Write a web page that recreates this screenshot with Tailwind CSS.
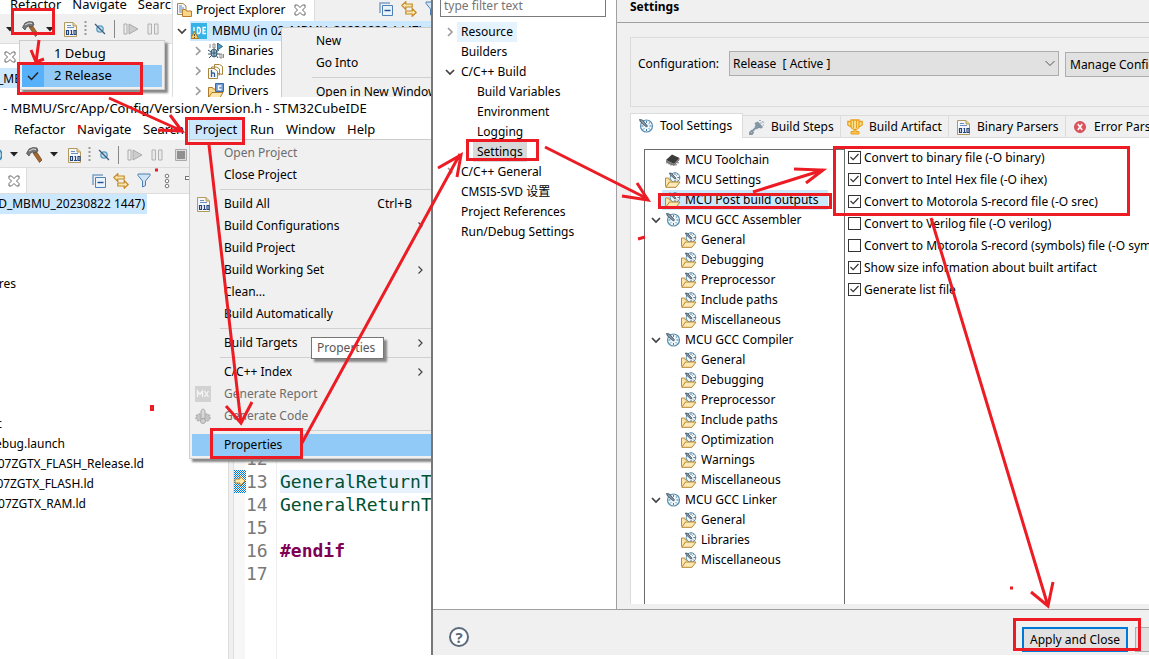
<!DOCTYPE html>
<html lang="en">

<head>
  <meta charset="UTF-8" />
  <meta name="viewport" content="width=device-width, initial-scale=1.0" />
  <title>STM32CubeIDE - build outputs</title>
  <script src="https://cdn.jsdelivr.net/npm/@tailwindcss/browser@4"></script>
</head>

<body class="bg-white">
  <!-- Icon set -->
  <svg class="hidden" xmlns="http://www.w3.org/2000/svg">
    <symbol id="caret" viewBox="0 0 8 5"><path d="M0 0h8L4 4.5z" fill="#222" /></symbol>
    <symbol id="right" viewBox="0 0 8 10"><path d="M2 1l4 4-4 4" fill="none" stroke="currentColor" stroke-width="1.6" /></symbol>
    <symbol id="sub" viewBox="0 0 8 10"><path d="M2.500 1.500L6 5 2.500 8.500" fill="none" stroke="#444" stroke-width="1.200" /></symbol>
    <symbol id="down" viewBox="0 0 10 8"><path d="M1 2l4 4 4-4" fill="none" stroke="#404040" stroke-width="1.7" /></symbol>
    <symbol id="hammer" viewBox="0 0 16 16">
      <path d="M7 6l3-2 6 9-2.500 2.500z" fill="#a5682e" stroke="#6d4019" stroke-width=".7" />
      <path d="M.5 6.500L3 2l4-1.500 4 .5 1 3-3 2-2-1-2.500 1L3 9z" fill="#777" stroke="#444" stroke-width=".7" />
      <path d="M3 4l4-2 3 .5" fill="none" stroke="#ddd" />
    </symbol>
    <symbol id="bin" viewBox="0 0 14 16">
      <path d="M.5 15.500V1.500h8.500l3.500 3.500v10.500z" fill="#f4f6fa" stroke="#b29a5c" />
      <path d="M9 1.500V5h3.500" fill="#e7cf8b" stroke="#b29a5c" />
      <path d="M3 4.500h4M3 6.500h7" stroke="#6b8fc0" />
      <path d="M2.500 9.500h2v4h-2zM10 9.500h2v4h-2zM6.500 9.500h1v4M6 13.500h3" fill="none" stroke="#24457c" stroke-width="1.200" />
    </symbol>
    <symbol id="vdots" viewBox="0 0 3 16"><path d="M1.500 0v16" stroke="#999" stroke-width="2" stroke-dasharray="2 2" /></symbol>
    <symbol id="skip" viewBox="0 0 14 14">
      <circle cx="7" cy="7" r="3.200" fill="#bfe0f0" stroke="#5b9cbe" stroke-width="1.300" />
      <path d="M2 2l10 10" stroke="#43597c" stroke-width="1.200" />
    </symbol>
    <symbol id="resume" viewBox="0 0 16 12">
      <path d="M1 1h3v10H1z" fill="#eee" stroke="#aaa" /><path d="M6 1l9 5-9 5z" fill="#ccc" stroke="#aaa" />
    </symbol>
    <symbol id="pause" viewBox="0 0 12 12"><path d="M1 1h3.500v10H1zM7.500 1H11v10H7.500z" fill="#eaeaea" stroke="#b0b0b0" /></symbol>
    <symbol id="stop" viewBox="0 0 12 12"><path d="M.5.5h11v11H.5z" fill="#ddd" stroke="#aaa" /><path d="M2 2h8v8H2z" fill="#909090" /></symbol>
    <symbol id="close" viewBox="0 0 12 12">
      <path d="M1 1h2.500L6 3.500 8.500 1H11v2.500L8.500 6 11 8.500V11H8.500L6 8.500 3.500 11H1V8.500L3.500 6 1 3.500z" fill="#fff" stroke="#666" />
    </symbol>
    <symbol id="collapse" viewBox="0 0 14 14">
      <path d="M1 11V1h10" fill="none" stroke="#7ba0c8" stroke-width="1.500" />
      <path d="M3.500 3.500h10v10h-10z" fill="#e9f3fc" stroke="#4f80b5" />
      <path d="M5.500 8.500h6" stroke="#205090" stroke-width="1.400" />
    </symbol>
    <symbol id="link" viewBox="0 0 16 16">
      <path d="M.8 4.500l4-3.800V3h6.400v3h-6.400v2.500z" fill="#fbe7ad" stroke="#c48a28" stroke-width="1.200" />
      <path d="M15.200 11.500l-4 3.800V13H4.800v-3h6.400V7.500z" fill="#fbe7ad" stroke="#c48a28" stroke-width="1.200" />
    </symbol>
    <symbol id="filter" viewBox="0 0 14 15"><path d="M1 1h12v1.500L8.500 8v4.500L5.500 14V8L1 2.500z" fill="#cfe4f7" stroke="#4b7fb0" /></symbol>
    <symbol id="more" viewBox="0 0 6 16">
      <g fill="#fff" stroke="#777"><circle cx="3" cy="3" r="1.800" /><circle cx="3" cy="8" r="1.800" /><circle cx="3" cy="13" r="1.800" /></g>
    </symbol>
    <symbol id="explorer" viewBox="0 0 16 16">
      <path d="M1.500 12.500V1.500H7L10 4v8.500z" fill="#f5f7fb" stroke="#a38a4a" />
      <path d="M3 4h3M3 6h5M3 8h3M3 10h3" stroke="#5d89c0" />
      <path d="M6.500 14.500v-7h3l1 1.500h5v5.500z" fill="#f9d68a" stroke="#b87d28" />
    </symbol>
    <symbol id="ide" viewBox="0 0 16 16">
      <path d="M0 0h16v16H0z" fill="#35b2e6" />
      <path d="M3 4v4M6.500 4.500v6h1c2.500 0 2.500-6 0-6zM15 4.500h-3v6h3M12 7.500h2.500" fill="none" stroke="#fff" stroke-width="1.300" />
      <path d="M3.500 8.500l4 7h-8z" fill="#f8cf62" stroke="#b57a1c" /><path d="M3.500 11v2M3.500 14v1" stroke="#543" />
    </symbol>
    <symbol id="binaries" viewBox="0 0 16 16">
      <path d="M2 1v4M5 1h2v4H5zM12 11h2v4h-2zM15.500 11v4" fill="none" stroke="#8a8a8a" />
      <path d="M9.500 0v7l5-3.500z" fill="#4a9ec0" stroke="#28688a" />
      <ellipse cx="6" cy="10" rx="3" ry="4" fill="#9fc3d8" stroke="#34566c" />
      <path d="M0 7l3 2M0 11h3M1 15l3-3M11 7L8 9M12 11H9M10 15l-2-3M3 10h6M6 7v7" stroke="#34566c" fill="none" />
    </symbol>
    <symbol id="includes" viewBox="0 0 16 16">
      <path d="M6.500 9.500v-8h5l3 2v8zM3.500 12v-8h5l3 2v6z" fill="#fff" stroke="#a6853c" />
      <path d="M.5 15.500v-10H6L9.500 8v7.500z" fill="#f6f8fc" stroke="#a6853c" />
      <path d="M3.500 7v7M3.500 11c0-1.500 3-1.500 3 0v3" fill="none" stroke="#325a9a" stroke-width="1.300" />
    </symbol>
    <symbol id="cfolder" viewBox="0 0 16 16">
      <path d="M.5 14V4.500h4l1 1.500h7v8z" fill="#f8d98f" stroke="#b07b29" />
      <path d="M7.500.5h8v8h-8z" fill="#6f9bd4" stroke="#3c69aa" />
      <path d="M13.500 3h-3v3.500h3" fill="none" stroke="#fff" stroke-width="1.300" />
      <path d="M.5 14.500L4 9.500h11l-3 5z" fill="#fbe6ac" stroke="#b07b29" />
    </symbol>
    <symbol id="dial" viewBox="0 0 16 16">
      <circle cx="8.500" cy="8" r="6" fill="#eef6fb" stroke="#5b8fae" stroke-width="1.200" />
      <path d="M8.500 3v2M8.500 11v2M3.500 8h2M11.500 8h2M12 4.500l-1.300 1.300M5 11.500l1.200-1.200M12 11.500l-1.200-1.200" stroke="#3f7fa6" />
      <path d="M1.500 1.500l3 .5 5 6-1 1-6-5z" fill="#8b9aa5" stroke="#34495a" stroke-width=".8" />
    </symbol>
    <symbol id="tool" viewBox="0 0 16 16">
      <path d="M.5 14.500v-8.500h3l1 2h7v3" fill="#fbe6ac" stroke="#bd8b3b" />
      <circle cx="10" cy="5.500" r="4.800" fill="#eef6fb" stroke="#5b8fae" />
      <path d="M4.500 1l2 .3 4.500 5-1 .8-5-4.500zM10 1.500v1.500M12.500 5.500h2M12.500 2.500l-1 1M10 8v2M12 7.500l1 1" fill="#8b9aa5" stroke="#34495a" stroke-width=".8" />
      <path d="M.8 15.300L4.500 10H15l-4 5.300z" fill="#fde9b4" stroke="#b8862f" />
    </symbol>
    <symbol id="chip" viewBox="0 0 16 16">
      <path d="M1 8l6-5.500L14.500 6 9 12z" fill="#3b3b3b" /><path d="M1 8l8 4v2L1 10zM9 12l5.500-6v2L9 14z" fill="#777" />
      <path d="M2 10v1.500M4 11v1.500M6 12v1.500M11 12v1.500M13 10v1.500" stroke="#555" />
    </symbol>
    <symbol id="steps" viewBox="0 0 16 16">
      <path d="M5.500 4L9 2.500l5 5.500-1.500 1.500-3-.5-1.500 1.500L5.500 8l1-1.500z" fill="#8396a5" /><path d="M7 8.500L2.500 13M3 11.500L1 13.500V15h2l1.500-2" stroke="#8396a5" stroke-width="1.800" fill="none" />
      <path d="M10 1.500h2M13 2.500l2 1M11 4h2M13.500 6h1.500" stroke="#9cabb7" stroke-width="1.200" />
    </symbol>
    <symbol id="trophy" viewBox="0 0 16 16">
      <path d="M4 1h8v6c0 2-2 3.500-4 3.500S4 9 4 7zM4 2.500H.8V6L4 8M12 2.500h3.200V6L12 8" fill="#fbe08c" stroke="#e8a020" stroke-width="1.300" />
      <path d="M6.500 1v8M9.500 1v8" stroke="#e8a020" /><path d="M7 10.500h2v2h3V15H4v-2.500h3z" fill="#f8c44e" stroke="#e8a020" />
    </symbol>
    <symbol id="error" viewBox="0 0 14 14">
      <circle cx="7" cy="7" r="5.500" fill="#e0525c" stroke="#c83c4c" stroke-width=".8" /><path d="M4.800 4l4.400 6M9.200 4l-4.400 6" stroke="#fff" stroke-width="1.500" />
    </symbol>
    <symbol id="mx" viewBox="0 0 16 16">
      <path d="M0 0h16v16H0z" fill="#d2d2d2" /><path d="M2.500 11V5L5 8.500 7.500 5v6M9.500 5l4 6M13.500 5l-4 6" fill="none" stroke="#f4f4f4" stroke-width="1.300" />
    </symbol>
    <symbol id="gen" viewBox="0 0 16 16">
      <circle cx="4.500" cy="9.500" r="3.500" fill="#c4c4c4" stroke="#b0b0b0" stroke-width="1.500" stroke-dasharray="2 1" />
      <circle cx="11.500" cy="9.500" r="3.500" fill="#c4c4c4" stroke="#b0b0b0" stroke-width="1.500" stroke-dasharray="2 1" />
      <circle cx="8" cy="13" r="2.500" fill="#d0d0d0" stroke="#a8a8a8" /><path d="M6 2.500L8 .8l2 1.700v8H6z" fill="#d8d8d8" stroke="#a8a8a8" />
    </symbol>
  </svg>

  <div class="relative flex h-screen overflow-hidden whitespace-nowrap bg-white font-['Noto_Sans','Noto_Sans_CJK_SC',sans-serif] text-[12px] leading-5 text-black">

    <!-- IDE windows -->
    <div class="relative flex w-[431px] shrink-0 flex-col overflow-hidden">
      <div class="flex h-[97px] shrink-0 overflow-hidden">
        <!-- Toolbar with build drop-down -->
        <div class="relative flex w-[172px] shrink-0 flex-col overflow-hidden">
          <div class="flex h-3.5 shrink-0 gap-[11px] pl-2.5 text-[13px] leading-[8px]">
            <span>Refactor</span><span>Navigate</span><span>Search</span>
          </div>
          <div class="flex h-[30px] shrink-0 items-center border-b border-[#ddd] bg-[#f0f0f0] pl-1.5 pt-px">
            <svg class="h-[5px] w-2"><use href="#caret" /></svg>
            <svg class="ml-2 h-4 w-4"><use href="#hammer" /></svg>
            <svg class="ml-2 h-[5px] w-2"><use href="#caret" /></svg>
            <svg class="ml-2.5 h-4 w-3.5"><use href="#bin" /></svg>
            <svg class="ml-1.5 h-4 w-[3px]"><use href="#vdots" /></svg>
            <svg class="ml-1.5 h-3.5 w-3.5"><use href="#skip" /></svg>
            <span class="ml-[7px] h-[18px] w-px bg-[#888]"></span>
            <svg class="ml-2 h-3 w-4"><use href="#resume" /></svg>
            <svg class="ml-2 h-3 w-3"><use href="#pause" /></svg>
          </div>
          <div class="flex h-6 shrink-0 items-center bg-white pl-1 pt-0.5">
            <svg class="h-3 w-3"><use href="#close" /></svg>
          </div>
          <div class="flex h-5 w-[22px] shrink-0 justify-end overflow-hidden bg-[#cce8ff] pt-px">_MB</div>
          <div class="absolute left-[19px] top-10 flex w-[146px] flex-col border border-[#ccc] bg-[#f0f0f0] p-0.5 text-[13px] leading-[18px] shadow-[3px_3px_2px_#888]">
            <button class="h-[22px] pb-0.5 pl-8 text-left">1 Debug</button>
            <button class="flex h-[22px] items-center bg-[#91c9f7] text-left">
              <span class="flex h-[22px] w-[22px] items-center justify-center bg-[#56b0fa]">
                <svg class="h-2.5 w-3" viewBox="0 0 12 10"><path d="M1 5l3.500 3.500L11 1.500" fill="none" stroke="#222" stroke-width="1.500" /></svg>
              </span>
              <span class="pb-0.5 pl-2.5">2 Release</span>
            </button>
          </div>
        </div>

        <!-- Project Explorer -->
        <div class="relative flex flex-1 flex-col overflow-hidden border-l border-[#ddd]">
          <div class="flex h-[21px] shrink-0 bg-[#f0f0f0]">
            <div class="flex w-[141px] shrink-0 items-center bg-white pl-[3px] pb-0.5">
              <svg class="h-4 w-4"><use href="#explorer" /></svg>
              <span class="ml-1">Project Explorer</span>
              <svg class="ml-2 h-3 w-3"><use href="#close" /></svg>
            </div>
            <div class="flex flex-1 items-center gap-2 overflow-hidden border-l border-[#ddd] pl-16 pb-1">
              <svg class="h-3.5 w-3.5 shrink-0"><use href="#collapse" /></svg>
              <svg class="h-4 w-4 shrink-0"><use href="#link" /></svg>
              <svg class="h-[15px] w-3.5 shrink-0"><use href="#filter" /></svg>
            </div>
          </div>
          <div class="flex h-5 shrink-0 items-center pl-1">
            <svg class="h-2 w-2.5"><use href="#down" /></svg>
            <span class="ml-[3px] flex flex-1 items-center bg-[#cce8ff] pl-px"><svg class="h-4 w-4"><use href="#ide" /></svg><span class="ml-[5px]">MBMU (in 02_MBMU_20230822 1447)</span></span>
          </div>
          <div class="flex h-5 shrink-0 items-center pl-[21px] text-[#999]"><svg class="h-2.5 w-2"><use href="#right" /></svg><svg class="ml-1.5 h-4 w-4"><use href="#binaries" /></svg><span class="ml-1 text-black">Binaries</span></div>
          <div class="flex h-5 shrink-0 items-center pl-[21px] text-[#999]"><svg class="h-2.5 w-2"><use href="#right" /></svg><svg class="ml-1.5 h-4 w-4"><use href="#includes" /></svg><span class="ml-1 text-black">Includes</span></div>
          <div class="flex h-5 shrink-0 items-center pl-[21px] text-[#999]"><svg class="h-2.5 w-2"><use href="#right" /></svg><svg class="ml-1.5 h-4 w-4"><use href="#cfolder" /></svg><span class="ml-1 text-black">Drivers</span></div>
          <div class="absolute left-[108px] top-[27px] flex w-[152px] flex-col border border-[#ccc] bg-[#f0f0f0] pt-0.5">
            <button class="h-[22px] pl-[34px] text-left">New</button>
            <button class="h-[22px] pl-[34px] text-left">Go Into</button>
            <hr class="my-[3px] ml-[30px] border-[#d0d0d0]" />
            <button class="h-[22px] pl-[34px] text-left">Open in New Window</button>
          </div>
        </div>
      </div>

      <!-- Main IDE window -->
      <div class="h-[22px] shrink-0 pl-[3px] text-[13px] leading-[22px]">- MBMU/Src/App/Config/Version/Version.h - STM32CubeIDE</div>
      <div class="flex h-[21px] shrink-0 items-center pl-3.5 text-[13px] leading-[18px]">
        <button class="w-[63px] pb-0.5 text-left">Refactor</button><button class="w-[66px] pb-0.5 text-left">Navigate</button><button class="w-[46px] pb-0.5 text-left">Search</button>
        <button class="h-[21px] w-[54px] border border-[#99d1ff] bg-[#cce8ff] pb-0.5">Project</button>
        <button class="ml-[7px] w-9 pb-0.5 text-left">Run</button><button class="w-[61px] pb-0.5 text-left">Window</button><button class="pb-0.5 text-left">Help</button>
      </div>
      <div class="flex h-7 shrink-0 items-center border-b border-[#ddd] bg-[#f0f0f0] pt-0.5">
        <svg class="h-3.5 w-0.5" viewBox="11 0 2 14"><circle cx="7" cy="7" r="6" fill="#a7d4ea" stroke="#3b86b0" stroke-width="1.500" /></svg>
        <svg class="ml-2 h-[5px] w-2"><use href="#caret" /></svg>
        <svg class="ml-2 h-4 w-4"><use href="#hammer" /></svg>
        <svg class="ml-2 h-[5px] w-2"><use href="#caret" /></svg>
        <svg class="ml-2.5 h-4 w-3.5"><use href="#bin" /></svg>
        <svg class="ml-1.5 h-4 w-[3px]"><use href="#vdots" /></svg>
        <svg class="ml-1.5 h-3.5 w-3.5"><use href="#skip" /></svg>
        <span class="ml-[7px] h-[18px] w-px bg-[#888]"></span>
        <svg class="ml-2 h-3 w-4"><use href="#resume" /></svg>
        <svg class="ml-2 h-3 w-3"><use href="#pause" /></svg>
        <svg class="ml-3 h-3 w-3"><use href="#stop" /></svg>
      </div>
      <div class="flex flex-1 overflow-hidden">
        <div class="w-[229px] shrink-0 border-r border-[#ddd]">
          <div class="flex h-[26px] items-center border-b border-[#ddd] bg-[#f0f0f0]">
            <div class="flex h-full w-[27px] items-center border-r border-[#ddd] bg-white pl-2"><svg class="h-3 w-3"><use href="#close" /></svg></div>
            <svg class="ml-[65px] h-3.5 w-3.5"><use href="#collapse" /></svg>
            <svg class="ml-[7px] h-4 w-4"><use href="#link" /></svg>
            <svg class="ml-2 h-[15px] w-3.5"><use href="#filter" /></svg>
            <svg class="ml-[13px] h-4 w-1.5"><use href="#more" /></svg>
            <span class="ml-[15px] mb-1.5 h-1 w-2 border border-[#777] bg-white"></span>
          </div>
          <div class="flex h-5 w-[147px] justify-end overflow-hidden bg-[#cce8ff] pr-0.5">D_MBMU_20230822 1447)</div>
          <ul class="pt-[60px]">
            <li class="flex h-5 w-4 justify-end">ures</li>
            <li class="mt-[120px] flex h-5 w-0.5 justify-end">c</li>
            <li class="flex h-5 w-[65px] justify-end">Debug.launch</li>
            <li class="flex h-5 w-[144px] justify-end">07ZGTX_FLASH_Release.ld</li>
            <li class="flex h-5 w-[94px] justify-end">07ZGTX_FLASH.ld</li>
            <li class="flex h-5 w-[86px] justify-end">07ZGTX_RAM.ld</li>
          </ul>
        </div>
        <!-- Code editor -->
        <div class="flex flex-1 overflow-hidden border-l-4 border-[#f0f0f0] pt-[279px] font-['DejaVu_Sans_Mono',monospace] text-[18px] leading-[23px]">
          <div class="-mt-[279px] w-3 shrink-0 border-l border-[#ddd] bg-[#f7f7f7] pt-[302px]">
            <svg class="h-[23px] w-3" viewBox="0 0 12 23">
              <defs><pattern id="weave" width="2" height="2" patternUnits="userSpaceOnUse"><path d="M0 0h1v1H0zM1 1h1v1H1z" fill="#0078d7" /></pattern></defs>
              <path d="M0 0h12v23H0z" fill="url(#weave)" />
              <path d="M1 9h5V6l5 5-5 5v-3H1z" fill="#fbe9b0" stroke="#b9832b" />
            </svg>
          </div>
          <div class="w-8 shrink-0 border-r border-[#eee] pl-px text-[#787878]">
            <div>12</div><div>13</div><div>14</div><div>15</div><div>16</div><div>17</div>
          </div>
          <div class="flex-1 overflow-hidden pl-[3px] text-[#005032]">
            <div class="h-[23px]"></div>
            <div class="bg-[#e8f2fe]">GeneralReturnType</div>
            <div>GeneralReturnType</div>
            <div class="h-[23px]"></div>
            <div class="font-bold text-[#7f0055]">#endif</div>
          </div>
        </div>
      </div>

      <!-- Project menu -->
      <div class="absolute left-[189px] top-[139px] flex w-[246px] flex-col border border-[#ccc] bg-[#f0f0f0] p-0.5 shadow-[3px_3px_2px_#888]">
        <button class="h-[22px] pl-8 text-left text-[#6d6d6d]">Open Project</button>
        <button class="h-[22px] pl-8 text-left">Close Project</button>
        <hr class="my-[3px] ml-7 border-[#d0d0d0]" />
        <button class="flex h-[22px] items-center pl-[5px] pr-5"><svg class="h-4 w-3.5"><use href="#bin" /></svg><span class="ml-[13px]">Build All</span><span class="ml-auto">Ctrl+B</span></button>
        <button class="flex h-[22px] items-center justify-between pl-8 pr-2">Build Configurations<svg class="h-2.5 w-2"><use href="#sub" /></svg></button>
        <button class="h-[22px] pl-8 text-left">Build Project</button>
        <button class="flex h-[22px] items-center justify-between pl-8 pr-2">Build Working Set<svg class="h-2.5 w-2"><use href="#sub" /></svg></button>
        <button class="h-[22px] pl-8 text-left">Clean...</button>
        <button class="h-[22px] pl-8 text-left">Build Automatically</button>
        <hr class="my-[3px] ml-7 border-[#d0d0d0]" />
        <button class="flex h-[22px] items-center justify-between pl-8 pr-2">Build Targets<svg class="h-2.5 w-2"><use href="#sub" /></svg></button>
        <hr class="my-[3px] ml-7 border-[#d0d0d0]" />
        <button class="flex h-[22px] items-center justify-between pl-8 pr-2">C/C++ Index<svg class="h-2.5 w-2"><use href="#sub" /></svg></button>
        <button class="flex h-[22px] items-center gap-[13px] pl-[3px] text-[#6d6d6d]"><svg class="h-4 w-4"><use href="#mx" /></svg>Generate Report</button>
        <button class="flex h-[22px] items-center gap-[13px] pl-[3px] text-[#6d6d6d]"><svg class="h-4 w-4"><use href="#gen" /></svg>Generate Code</button>
        <hr class="my-[3px] ml-7 border-[#d0d0d0]" />
        <button class="h-[22px] bg-[#91c9f7] pl-8 text-left">Properties</button>
      </div>
      <div class="absolute left-[311px] top-[337px] w-[73px] border border-[#767676] bg-white px-[5px] text-[#575757] shadow-[3px_3px_2px_#888]">Properties</div>
    </div>

    <!-- Properties dialog -->
    <div class="mb-1 flex flex-1 flex-col overflow-hidden border-l-2 border-[#777] bg-[#f0f0f0]">
      <div class="flex flex-1 overflow-hidden border-b border-[#a0a0a0]">
        <div class="w-[183px] shrink-0 bg-white pl-px">
          <input type="text" aria-label="Filter" placeholder="type filter text" class="ml-1.5 block h-[17px] w-[166px] border border-t-0 border-[#7a7a7a] pb-1.5 pl-[3px] leading-3 placeholder:text-[#757575]" />
          <ul class="pt-[5px]">
            <li class="flex h-5 items-center pl-3 text-[#999]"><svg class="h-2.5 w-2"><use href="#right" /></svg><span class="ml-[3px] bg-[#e5f3ff] px-1 text-black">Resource</span></li>
            <li class="h-5 pl-[27px]">Builders</li>
            <li class="flex h-5 items-center pl-[11px]"><svg class="h-2 w-2.5"><use href="#down" /></svg><span class="ml-1.5">C/C++ Build</span></li>
            <li class="h-5 pl-[43px]">Build Variables</li>
            <li class="h-5 pl-[43px]">Environment</li>
            <li class="h-5 pl-[43px]">Logging</li>
            <li class="h-5 pl-[39px]"><span class="inline-block bg-[#d9d9d9] px-1">Settings</span></li>
            <li class="flex h-5 items-center pl-3 text-[#999]"><svg class="h-2.5 w-2"><use href="#right" /></svg><span class="ml-[7px] text-black">C/C++ General</span></li>
            <li class="h-5 pl-[27px]">CMSIS-SVD 设置</li>
            <li class="h-5 pl-[27px]">Project References</li>
            <li class="h-5 pl-[27px]">Run/Debug Settings</li>
          </ul>
        </div>

        <div class="flex flex-1 flex-col overflow-hidden border-l border-[#a0a0a0] pb-[5px]">
          <h1 class="h-[23px] shrink-0 border-b border-[#a0a0a0] pl-[13px] leading-[14px] font-bold">Settings</h1>
          <div class="ml-[13px] mt-3.5 flex h-[70px] shrink-0 items-start border border-r-0 border-[#dcdcdc] pl-[7px] pt-[13px]">
            <label for="config" class="w-[91px] shrink-0 pt-[3px]">Configuration:</label>
            <div class="relative min-w-[330px] flex-1">
              <select id="config" class="block h-[25px] w-full appearance-none border border-[#adadad] bg-[#e1e1e1] pl-[3px]"><option>Release&nbsp; [ Active ]</option></select>
              <svg class="pointer-events-none absolute right-1 top-2 h-2 w-2.5" viewBox="0 0 10 8"><path d="M.5 2L5 6.500 9.500 2" fill="none" stroke="#555" /></svg>
            </div>
            <button class="ml-1.5 mt-px h-[25px] w-[84px] shrink-0 overflow-hidden border border-r-0 border-[#adadad] bg-[#e1e1e1] pl-1 text-left">Manage Configurations...</button>
          </div>

          <div class="ml-[13px] mt-1.5 flex h-[25px] shrink-0 items-end">
            <button class="flex h-[25px] w-[113px] shrink-0 items-center gap-1.5 border border-b-0 border-[#dcdcdc] bg-white pl-[7px]"><svg class="h-4 w-4"><use href="#dial" /></svg>Tool Settings</button>
            <button class="flex h-[23px] w-[98px] shrink-0 items-center gap-1.5 border-y border-r border-[#dcdcdc] pl-1.5"><svg class="h-4 w-4"><use href="#steps" /></svg>Build Steps</button>
            <button class="flex h-[23px] w-[108px] shrink-0 items-center gap-1.5 border-y border-r border-[#dcdcdc] pl-1.5"><svg class="h-4 w-4"><use href="#trophy" /></svg>Build Artifact</button>
            <button class="flex h-[23px] w-[117px] shrink-0 items-center gap-1.5 border-y border-r border-[#dcdcdc] pl-2"><svg class="h-4 w-3.5"><use href="#bin" /></svg>Binary Parsers</button>
            <button class="flex h-[23px] shrink-0 items-center gap-[7px] border-y border-[#dcdcdc] pl-[7px]"><svg class="h-3.5 w-3.5"><use href="#error" /></svg>Error Parsers</button>
          </div>

          <div class="ml-[13px] flex flex-1 overflow-hidden border-l border-[#dcdcdc] bg-white pl-[13px] pt-[11px]">
            <!-- Tool tree -->
            <ul class="w-[201px] shrink-0 border border-b-0 border-[#6a6a6a]">
              <li class="flex h-5 items-center gap-1 pl-5"><svg class="h-4 w-4"><use href="#chip" /></svg>MCU Toolchain</li>
              <li class="flex h-5 items-center gap-1 pl-5"><svg class="h-4 w-4"><use href="#tool" /></svg>MCU Settings</li>
              <li class="ml-[17px] mr-4 flex h-5 items-center gap-1 bg-[#cce8ff] pl-[3px]"><svg class="h-4 w-4"><use href="#tool" /></svg>MCU Post build outputs</li>
              <li class="flex h-5 items-center gap-1 pl-1.5"><svg class="h-2 w-2.5"><use href="#down" /></svg><svg class="h-4 w-4"><use href="#dial" /></svg>MCU GCC Assembler</li>
              <li class="flex h-5 items-center gap-1 pl-9"><svg class="h-4 w-4"><use href="#tool" /></svg>General</li>
              <li class="flex h-5 items-center gap-1 pl-9"><svg class="h-4 w-4"><use href="#tool" /></svg>Debugging</li>
              <li class="flex h-5 items-center gap-1 pl-9"><svg class="h-4 w-4"><use href="#tool" /></svg>Preprocessor</li>
              <li class="flex h-5 items-center gap-1 pl-9"><svg class="h-4 w-4"><use href="#tool" /></svg>Include paths</li>
              <li class="flex h-5 items-center gap-1 pl-9"><svg class="h-4 w-4"><use href="#tool" /></svg>Miscellaneous</li>
              <li class="flex h-5 items-center gap-1 pl-1.5"><svg class="h-2 w-2.5"><use href="#down" /></svg><svg class="h-4 w-4"><use href="#dial" /></svg>MCU GCC Compiler</li>
              <li class="flex h-5 items-center gap-1 pl-9"><svg class="h-4 w-4"><use href="#tool" /></svg>General</li>
              <li class="flex h-5 items-center gap-1 pl-9"><svg class="h-4 w-4"><use href="#tool" /></svg>Debugging</li>
              <li class="flex h-5 items-center gap-1 pl-9"><svg class="h-4 w-4"><use href="#tool" /></svg>Preprocessor</li>
              <li class="flex h-5 items-center gap-1 pl-9"><svg class="h-4 w-4"><use href="#tool" /></svg>Include paths</li>
              <li class="flex h-5 items-center gap-1 pl-9"><svg class="h-4 w-4"><use href="#tool" /></svg>Optimization</li>
              <li class="flex h-5 items-center gap-1 pl-9"><svg class="h-4 w-4"><use href="#tool" /></svg>Warnings</li>
              <li class="flex h-5 items-center gap-1 pl-9"><svg class="h-4 w-4"><use href="#tool" /></svg>Miscellaneous</li>
              <li class="flex h-5 items-center gap-1 pl-1.5"><svg class="h-2 w-2.5"><use href="#down" /></svg><svg class="h-4 w-4"><use href="#dial" /></svg>MCU GCC Linker</li>
              <li class="flex h-5 items-center gap-1 pl-9"><svg class="h-4 w-4"><use href="#tool" /></svg>General</li>
              <li class="flex h-5 items-center gap-1 pl-9"><svg class="h-4 w-4"><use href="#tool" /></svg>Libraries</li>
              <li class="flex h-5 items-center gap-1 pl-9"><svg class="h-4 w-4"><use href="#tool" /></svg>Miscellaneous</li>
            </ul>
            <!-- Output options -->
            <div class="flex flex-1 flex-col overflow-hidden pl-[3px] -mt-0.5">
              <label class="relative flex h-[22px] shrink-0 items-center gap-[3px]"><input type="checkbox" checked class="peer mb-0.5 h-[13px] w-[13px] shrink-0 appearance-none border border-[#333] bg-white" /><svg class="absolute left-0.5 top-1.5 hidden h-2 w-[9px] peer-checked:block" viewBox="0 0 9 8"><path d="M.5 4l2.700 2.700L8.500 1" fill="none" stroke="#333" stroke-width="1.200" /></svg>Convert to binary file (-O binary)</label>
              <label class="relative flex h-[22px] shrink-0 items-center gap-[3px]"><input type="checkbox" checked class="peer mb-0.5 h-[13px] w-[13px] shrink-0 appearance-none border border-[#333] bg-white" /><svg class="absolute left-0.5 top-1.5 hidden h-2 w-[9px] peer-checked:block" viewBox="0 0 9 8"><path d="M.5 4l2.700 2.700L8.500 1" fill="none" stroke="#333" stroke-width="1.200" /></svg>Convert to Intel Hex file (-O ihex)</label>
              <label class="relative flex h-[22px] shrink-0 items-center gap-[3px]"><input type="checkbox" checked class="peer mb-0.5 h-[13px] w-[13px] shrink-0 appearance-none border border-[#333] bg-white" /><svg class="absolute left-0.5 top-1.5 hidden h-2 w-[9px] peer-checked:block" viewBox="0 0 9 8"><path d="M.5 4l2.700 2.700L8.500 1" fill="none" stroke="#333" stroke-width="1.200" /></svg>Convert to Motorola S-record file (-O srec)</label>
              <label class="flex h-[22px] shrink-0 items-center gap-[3px]"><input type="checkbox" class="mb-0.5 h-[13px] w-[13px] shrink-0 appearance-none border border-[#333] bg-white" />Convert to Verilog file (-O verilog)</label>
              <label class="flex h-[22px] shrink-0 items-center gap-[3px]"><input type="checkbox" class="mb-0.5 h-[13px] w-[13px] shrink-0 appearance-none border border-[#333] bg-white" />Convert to Motorola S-record (symbols) file (-O symbolsrec)</label>
              <label class="relative flex h-[22px] shrink-0 items-center gap-[3px]"><input type="checkbox" checked class="peer mb-0.5 h-[13px] w-[13px] shrink-0 appearance-none border border-[#333] bg-white" /><svg class="absolute left-0.5 top-1.5 hidden h-2 w-[9px] peer-checked:block" viewBox="0 0 9 8"><path d="M.5 4l2.700 2.700L8.500 1" fill="none" stroke="#333" stroke-width="1.200" /></svg>Show size information about built artifact</label>
              <label class="relative flex h-[22px] shrink-0 items-center gap-[3px]"><input type="checkbox" checked class="peer mb-0.5 h-[13px] w-[13px] shrink-0 appearance-none border border-[#333] bg-white" /><svg class="absolute left-0.5 top-1.5 hidden h-2 w-[9px] peer-checked:block" viewBox="0 0 9 8"><path d="M.5 4l2.700 2.700L8.500 1" fill="none" stroke="#333" stroke-width="1.200" /></svg>Generate list file</label>
            </div>
          </div>
        </div>
      </div>

      <div class="flex h-[45px] shrink-0 items-start pt-[17px]">
        <button class="ml-4 flex h-5 w-5 items-center justify-center rounded-full border-2 border-[#5b6b7b] bg-white text-[15px] font-bold leading-4 text-[#5b6b7b]">?</button>
        <button class="ml-auto h-[25px] w-[106px] border-2 border-[#0078d7] bg-[#e1e1e1]">Apply and Close</button>
        <button aria-label="Cancel" class="ml-[7px] h-[25px] w-3.5 border border-r-0 border-[#adadad] bg-[#e1e1e1]"></button>
      </div>
    </div>

    <!-- Red pen marks -->
    <svg class="pointer-events-none absolute left-0 top-0 h-[659px] w-[1149px]" viewBox="0 0 1149 659" fill="none" stroke="#ed1c24" stroke-width="3">
      <path d="M12.500 9.500h41v24h-41zM18.500 63.500h123v30h-123zM186.500 118.500h57v25h-57zM211.500 429.500h90v28h-90zM467.500 140.500h70v19h-70zM659.500 194.500h171v13h-171zM834.500 147.500h294v67h-294zM1014.500 619.500h125v30h-125z" />
      <path d="M39 40l-3 22M31 50l5 12 8-3M109 98l73 33M170 115l12 16-24-1M209 145l32 278M226 406l15 17 11-21M302 443l158-289M438 168l23-13-4 22" />
      <path d="M545 147l103 52M637 183l11 17-26-4M753 192l70-22M794 169l29 1-17 13M931 218l117 388M1031 592l17 14 5-24M638 239l7-2" />
      <path d="M78 127h3M151.500 406.500h1v3h-1zM155 170h3M1010 588h3" />
    </svg>
  </div>
</body>

</html>
